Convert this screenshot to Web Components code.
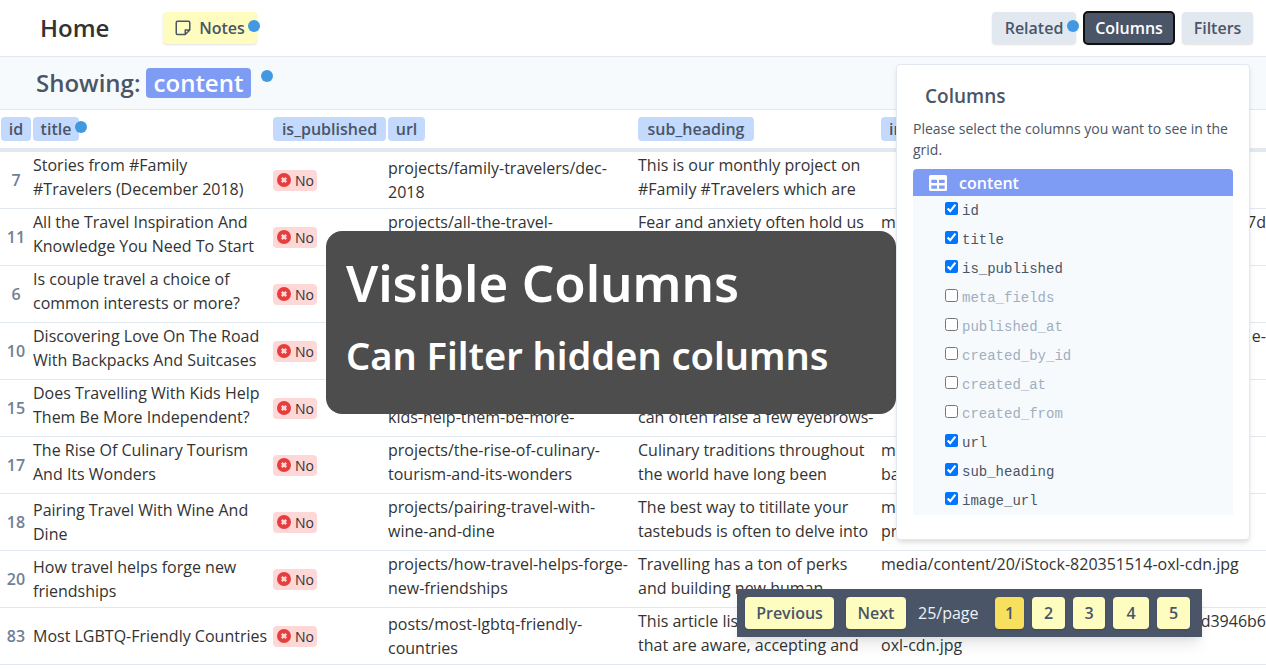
<!DOCTYPE html>
<html lang="en">
<head>
<meta charset="utf-8">
<meta name="viewport" content="width=device-width, initial-scale=1">
<title>Home</title>
<style>
html {
  --ink: #333;
  --slate: #4a5568;
  --line: #e2e8f0;
  --pale: #f7fafc;
  --indigo: #7f9cf5;
  --note: #fefcbf;
  font: 16px/24px "Open Sans", "Noto Sans", sans-serif;
  color: var(--ink);
  background: #fff;
}
body { margin: 0; height: 100vh; overflow: hidden; position: relative; }
</style>
</head>
<body>
<grid-app></grid-app>
<script>
const define = (name, html, setup) => {
  const template = document.createElement('template');
  template.innerHTML = '<style>*{box-sizing:border-box}:host([hidden]){display:none}</style>' + html;
  customElements.define(name, class extends HTMLElement {
    constructor() {
      super();
      this.attachShadow({ mode: 'open' }).append(template.content.cloneNode(true));
    }
    connectedCallback() { if (setup) setup(this.shadowRoot, this); }
  });
};

define('pulse-dot', `
<style>
:host { display: block; width: 12px; height: 12px; border-radius: 50%; background: #4299e1; }
</style>`);

define('tool-button', `
<style>
:host { display: block; position: relative; --bg: #e2e8f0; --fg: var(--slate); }
:host([kind=note]) { --bg: var(--note); }
:host([kind=current]) { --bg: #f6e05e; }
:host([kind=active]) { --bg: var(--slate); --fg: #fff; }
button { display: flex; align-items: center; justify-content: center; gap: 8px; height: 32px;
  padding: 0; border: 0; border-radius: 4px; background: var(--bg); color: var(--fg);
  font: inherit; font-weight: 600; white-space: nowrap; box-shadow: 0 1px 2px rgba(0,0,0,.12); }
:host([kind=active]) button { outline: 2px solid #101010; outline-offset: -1px; }
::slotted(pulse-dot) { position: absolute; top: 8px; right: -3px; }
</style>
<button type="button"><slot></slot></button><slot name="dot"></slot>`, (root, host) => {
  root.querySelector('button').style.width = host.getAttribute('width') + 'px';
});

define('top-bar', `
<style>
:host { display: flex; align-items: center; height: 57px; padding: 0 13px 0 40px; border-bottom: 1px solid var(--line); background: #fff; }
h1 { margin: 0; width: 123px; font-size: 24px; line-height: 32px; font-weight: 600; }
nav { display: flex; gap: 8px; margin-left: auto; }
svg { width: 16px; height: 16px; display: block; }
</style>
<h1>Home</h1>
<tool-button kind="note" width="94">
  <svg viewBox="0 0 16 16" fill="none" stroke="#4a5568" stroke-width="1.5" stroke-linejoin="round"><path d="M2.500 1.250h11q1.250 0 1.250 1.250V10l-4.500 4.500H2.500q-1.250 0-1.250-1.250v-10.750q0-1.250 1.250-1.250zM14.500 10h-4.250v4.500"/></svg>
  <span>Notes</span><pulse-dot slot="dot"></pulse-dot>
</tool-button>
<nav>
  <tool-button width="84">Related<pulse-dot slot="dot"></pulse-dot></tool-button>
  <tool-button width="90" kind="active">Columns</tool-button>
  <tool-button width="71">Filters</tool-button>
</nav>`);

define('showing-bar', `
<style>
:host { display: flex; align-items: center; gap: 7px; height: 53px; padding: 0 36px; border-bottom: 1px solid var(--line);
  background: var(--pale); color: var(--slate); font-size: 24px; line-height: 30px; font-weight: 600; }
h2 { margin: 0; font: inherit; width: 103px; white-space: nowrap; }
b { display: block; width: 105px; text-align: center; border-radius: 4px; background: var(--indigo); color: #fff; font-weight: 600; }
pulse-dot { margin: 0 0 14px 3px; }
</style>
<h2>Showing:</h2><b>content</b><pulse-dot></pulse-dot>`);

define('no-badge', `
<style>
:host { display: flex; align-items: center; gap: 4px; width: 44px; height: 21px; padding: 0 4px; border-radius: 4px;
  background: #fed7d7; font-size: 14px; line-height: 21px; }
svg { width: 14px; height: 14px; flex: none; }
</style>
<svg viewBox="0 0 14 14"><circle cx="7" cy="7" r="7" fill="#e53e3e"/><path d="M4.800 4.800l4.400 4.400M9.200 4.800L4.800 9.200" stroke="#fed7d7" stroke-width="2.400"/></svg>
<span>No</span>`);

const rows = [
  [7, ['Stories from #Family', '#Travelers (December 2018)', 1], ['projects/family-travelers/dec-', '2018', 0],
    ['This is our monthly project on', '#Family #Travelers which are', 1], null],
  [11, ['All the Travel Inspiration And', 'Knowledge You Need To Start', 1], ['projects/all-the-travel-', '', 1],
    ['Fear and anxiety often hold us', '', 1], ['m', '', 1, '7d']],
  [6, ['Is couple travel a choice of', 'common interests or more?', 1], null, null, null],
  [10, ['Discovering Love On The Road', 'With Backpacks And Suitcases', 1], null, null, ['', '', 1, 'e-']],
  [15, ['Does Travelling With Kids Help', 'Them Be More Independent?', 1], ['', 'kids-help-them-be-more-', 1],
    ['', 'can often raise a few eyebrows-', 1], null],
  [17, ['The Rise Of Culinary Tourism', 'And Its Wonders', 1], ['projects/the-rise-of-culinary-', 'tourism-and-its-wonders', 1],
    ['Culinary traditions throughout', 'the world have long been', 1], ['m', 'ba', 1]],
  [18, ['Pairing Travel With Wine And', 'Dine', 0], ['projects/pairing-travel-with-', 'wine-and-dine', 1],
    ['The best way to titillate your', 'tastebuds is often to delve into', 1], ['m', 'pr', 1]],
  [20, ['How travel helps forge new', 'friendships', 0], ['projects/how-travel-helps-forge-', 'new-friendships', 1],
    ['Travelling has a ton of perks', 'and building new human', 1], ['media/content/20/iStock-820351514-oxl-cdn.jpg', '', 1]],
  [83, ['Most LGBTQ-Friendly Countries'], ['posts/most-lgbtq-friendly-', 'countries', 0],
    ['This article lists', 'that are aware, accepting and', 1], ['', 'oxl-cdn.jpg', 1, 'd3946b6']],
];
const cell = (c) => {
  if (!c) return '<td></td>';
  const lines = c.length > 1
    ? `<div class="ln"><span>${c[0]}</span>${c[3] ? `<span>${c[3]}</span>` : ''}</div><div class="ln">${c[1]}</div>`
    : `<div class="ln">${c[0]}</div>`;
  return `<td class="${c[2] ? 'long' : ''}">${lines}</td>`;
};

define('data-grid', `
<style>
:host { display: block; }
table { width: 100%; table-layout: fixed; border-collapse: separate; border-spacing: 0; }
th, td { padding: 0; text-align: left; vertical-align: middle; }
th { height: 42px; border-bottom: 4px solid var(--line); }
td { height: 57px; border-bottom: 1px solid var(--line); white-space: nowrap; }
td.long { padding-bottom: 6px; }
td.id { text-align: center; color: #718096; font-weight: 600; padding-right: 1px; }
.c1 { width: 33px; } .c2 { width: 240px; } .c3 { width: 115px; } .c4 { width: 250px; } .c5 { width: 243px; }
.ln { display: flex; justify-content: space-between; height: 24px; }
.tag { display: block; position: relative; height: 24px; text-align: center; border-radius: 4px; background: #c3dafe;
  color: var(--slate); font-weight: 600; }
.c1 .tag { width: 30px; margin-left: 1px; } .c2 .tag { width: 46px; } .c3 .tag { width: 113px; } .c4 .tag { width: 37px; }
.c5 .tag { width: 116px; } .c6 .tag { width: 96px; padding-left: 8px; text-align: left; }
pulse-dot { position: absolute; top: 4px; right: -8px; }
</style>
<table>
<thead><tr>
<th class="c1"><span class="tag">id</span></th>
<th class="c2"><span class="tag">title<pulse-dot></pulse-dot></span></th>
<th class="c3"><span class="tag">is_published</span></th>
<th class="c4"><span class="tag">url</span></th>
<th class="c5"><span class="tag">sub_heading</span></th>
<th class="c6"><span class="tag">im</span></th>
</tr></thead>
<tbody></tbody>
</table>`, (root) => {
  root.querySelector('tbody').innerHTML = rows.map(([id, title, url, sub, img]) =>
    `<tr><td class="id">${id}</td>${cell(title)}<td><no-badge></no-badge></td>${cell(url)}${cell(sub)}${cell(img)}</tr>`).join('');
});

const fields = [['id', 1], ['title', 1], ['is_published', 1], ['meta_fields', 0], ['published_at', 0], ['created_by_id', 0],
  ['created_at', 0], ['created_from', 0], ['url', 1], ['sub_heading', 1], ['image_url', 1]];

define('columns-panel', `
<style>
:host { display: block; position: absolute; z-index: 3; top: 64px; right: 16px; width: 354px; padding: 16px 16px 24px; background: #fff;
  border: 1px solid var(--line); border-radius: 4px; box-shadow: 0 4px 6px -1px rgba(0,0,0,.1), 0 2px 4px -1px rgba(0,0,0,.06); color: var(--slate); }
h3 { margin: 0 12px 7px; font-size: 19px; line-height: 30px; font-weight: 600; }
p { margin: 0 0 9px; font-size: 14px; line-height: 21px; }
h4 { display: flex; align-items: center; gap: 12px; margin: 0; height: 27px; padding: 0 16px; border-radius: 4px 4px 0 0;
  background: var(--indigo); color: #fff; font-size: 16px; font-weight: 600; }
h4 svg { width: 18px; height: 16px; }
ul { margin: 0; padding: 0 32px; list-style: none; background: var(--pale); }
li { display: flex; align-items: center; gap: 4px; height: 29px; font: 14px/21px "Liberation Mono", monospace; }
input { width: 13px; height: 13px; margin: 0 0 4px; }
label { padding-top: 2px; }
.off { color: #a0aec0; }
</style>
<h3>Columns</h3>
<p>Please select the columns you want to see in the grid.</p>
<h4><svg viewBox="0 0 18 16"><path fill="#fff" fill-rule="evenodd" d="M1.500 0h15Q18 0 18 1.500v13q0 1.500-1.500 1.500h-15Q0 16 0 14.500v-13Q0 0 1.500 0zM2.300 4.800v3.200H8V4.800zM10 4.800v3.200h5.700V4.800zM2.300 10.500v3.200H8v-3.200zM10 10.500v3.200h5.700v-3.200z"/></svg>content</h4>
<ul></ul>`, (root) => {
  root.querySelector('ul').innerHTML = fields.map(([f, on]) =>
    `<li class="${on ? '' : 'off'}"><input type="checkbox" id="${f}" ${on ? 'checked' : ''}><label for="${f}">${f}</label></li>`).join('');
});

define('pager-bar', `
<style>
:host { display: flex; align-items: center; position: absolute; z-index: 4; right: 64px; bottom: 32px; height: 48px; padding: 0 12px 0 8px;
  gap: 8px; background: var(--slate); color: #edf2f7; box-shadow: 0 10px 15px -3px rgba(0,0,0,.1), 0 4px 6px -2px rgba(0,0,0,.05); }
.size { width: 65px; margin: 0 4px; white-space: nowrap; }
.next { margin-left: 4px; }
</style>
<tool-button kind="note" width="89">Previous</tool-button>
<tool-button kind="note" width="60" class="next">Next</tool-button>
<span class="size">25/page</span>
<tool-button kind="current" width="29">1</tool-button>
<tool-button kind="note" width="33">2</tool-button>
<tool-button kind="note" width="32">3</tool-button>
<tool-button kind="note" width="36">4</tool-button>
<tool-button kind="note" width="33">5</tool-button>`);

define('caption-card', `
<style>
:host { display: block; position: absolute; z-index: 2; left: 326px; top: 231px; width: 570px; height: 183px; padding: 16px 20px;
  border-radius: 16px; background: #4d4d4d; color: #fff; font-family: "Noto Sans", sans-serif; font-weight: 600; white-space: nowrap; }
.big { font-size: 51px; line-height: 70px; }
.small { font-size: 38px; line-height: 76px; }
</style>
<div class="big"><slot name="title"></slot></div>
<div class="small"><slot></slot></div>`);

define('grid-app', `
<style>:host { display: block; }</style>
<top-bar></top-bar>
<showing-bar></showing-bar>
<data-grid></data-grid>
<caption-card><span slot="title">Visible Columns</span>Can Filter hidden columns</caption-card>
<columns-panel></columns-panel>
<pager-bar></pager-bar>`);
</script>
</body>
</html>
